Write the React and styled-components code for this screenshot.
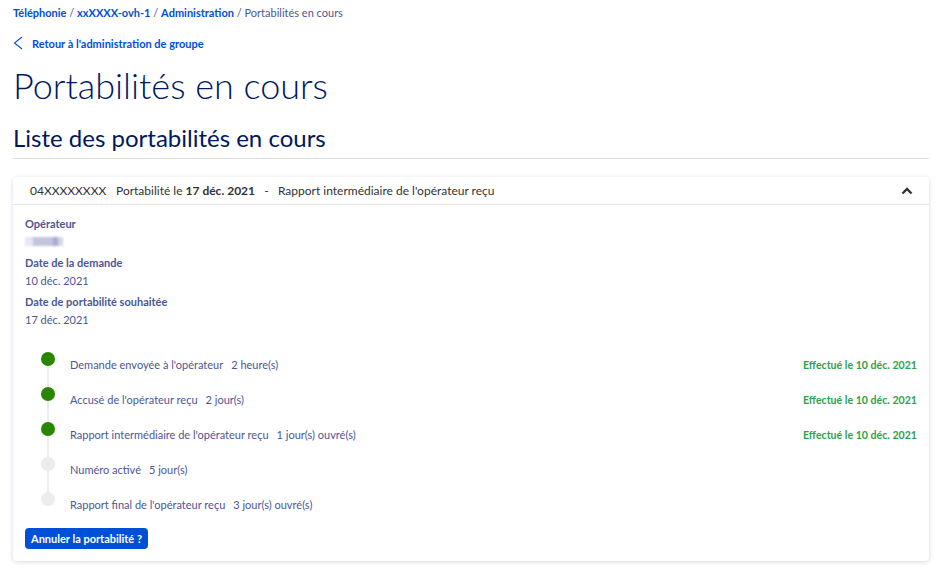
import styled, { createGlobalStyle } from 'styled-components';

const GlobalStyle = createGlobalStyle`
  body {
    margin: 0;
    background: #fff;
    font-family: 'Lato', 'Noto Sans', sans-serif;
  }
`;

const Page = styled.div`
  padding: 5px 23px 20px 13px;
`;

const Breadcrumb = styled.nav`
  font-size: 11px;
  line-height: 16px;
  color: #4d5693;
  white-space: nowrap;
`;

const Crumb = styled.a`
  color: #0050d7;
  font-weight: 700;
  text-decoration: none;
`;

const BackLink = styled.a`
  display: flex;
  align-items: center;
  gap: 9px;
  margin-top: 14px;
  height: 16px;
  color: #0050d7;
  font-size: 11px;
  font-weight: 700;
  text-decoration: none;
`;

const Title = styled.h1`
  margin: 12px 0 0;
  font-size: 36px;
  font-weight: 300;
  line-height: 44px;
  color: #00185e;
`;

const Subtitle = styled.h2`
  margin: 16px 0 0;
  font-size: 24px;
  font-weight: 400;
  line-height: 30px;
  color: #00185e;
  padding-bottom: 5px;
  border-bottom: 1px solid #dcdcdc;
`;

const Card = styled.section`
  margin-top: 18px;
  border-radius: 4px;
  background: #fff;
  box-shadow: 0 1px 4px rgba(40, 40, 120, 0.18);
`;

const CardHeader = styled.header`
  display: flex;
  align-items: center;
  height: 27px;
  padding: 0 16px 0 17px;
  border-bottom: 1px solid #e2e2e2;
  font-size: 12px;
  color: #333;
`;

const Number = styled.span`
  width: 86px;
`;

const Summary = styled.span`
  flex: 1;
  b {
    font-weight: 700;
  }
`;

const CardBody = styled.div`
  padding: 12px 12px 12px 12px;
`;

const Field = styled.div`
  display: flex;
  flex-direction: column;
  gap: 4px;
  margin-bottom: 7px;
  font-size: 11px;
  color: #4d5693;
`;

const Label = styled.span`
  font-weight: 700;
  line-height: 14px;
`;

const Value = styled.span`
  line-height: 14px;
`;

const Blur = styled.span`
  display: block;
  width: 38px;
  height: 9px;
  margin: 2px 0 3px;
  background: linear-gradient(90deg, #e6e7f0 0 20%, #c2c5de 20% 75%, #a9acd0 75% 88%, #d4d6e8 88%);
  filter: blur(1px);
`;

const Timeline = styled.ol`
  position: relative;
  list-style: none;
  margin: 25px 0 0;
  padding: 0;
  &::before {
    content: '';
    position: absolute;
    left: 22px;
    top: 8px;
    bottom: 28px;
    width: 2px;
    background: #ececec;
  }
`;

const Step = styled.li`
  position: relative;
  display: flex;
  align-items: flex-start;
  height: 35px;
  padding-left: 45px;
  font-size: 11px;
  color: #4d5693;
  &::before {
    content: '';
    position: absolute;
    left: 16px;
    top: 0;
    width: 14px;
    height: 14px;
    border-radius: 50%;
    background: ${(p) => (p.$done ? '#288600' : '#ececec')};
  }
`;

const StepText = styled.span`
  flex: 1;
  padding-top: 6px;
  line-height: 14px;
`;

const Duration = styled.span`
  margin-left: 8px;
`;

const Done = styled.span`
  padding-top: 6px;
  line-height: 14px;
  font-size: 10.6px;
  font-weight: 700;
  color: #2fa24a;
`;

const CancelButton = styled.button`
  margin-top: 0;
  height: 21px;
  padding: 0 6px;
  border: none;
  border-radius: 4px;
  background: #0050d7;
  color: #fff;
  font-family: inherit;
  font-size: 11px;
  font-weight: 700;
  cursor: pointer;
`;

const steps = [
  { label: "Demande envoyée à l'opérateur", duration: '2 heure(s)', done: true },
  { label: "Accusé de l'opérateur reçu", duration: '2 jour(s)', done: true },
  { label: "Rapport intermédiaire de l'opérateur reçu", duration: '1 jour(s) ouvré(s)', done: true },
  { label: 'Numéro activé', duration: '5 jour(s)', done: false },
  { label: "Rapport final de l'opérateur reçu", duration: '3 jour(s) ouvré(s)', done: false },
];

const App = () => (
  <>
    <GlobalStyle />
    <Page>
      <Breadcrumb>
        <Crumb href="#">Téléphonie</Crumb> / <Crumb href="#">xxXXXX-ovh-1</Crumb> /{' '}
        <Crumb href="#">Administration</Crumb> / Portabilités en cours
      </Breadcrumb>

      <BackLink href="#">
        <svg width="10" height="14" viewBox="0 0 10 14">
          <path d="M9 1 L1.5 7 L9 13" fill="none" stroke="#0050d7" strokeWidth="1.1" />
        </svg>
        Retour à l'administration de groupe
      </BackLink>

      <Title>Portabilités en cours</Title>
      <Subtitle>Liste des portabilités en cours</Subtitle>

      <Card>
        <CardHeader>
          <Number>04XXXXXXXX</Number>
          <Summary>
            Portabilité le <b>17 déc. 2021</b>&nbsp;&nbsp; - &nbsp;&nbsp;Rapport intermédiaire de
            l'opérateur reçu
          </Summary>
          <svg width="12" height="8" viewBox="0 0 12 8">
            <path d="M1.5 6.5 L6 2 L10.5 6.5" fill="none" stroke="#333" strokeWidth="2.4" />
          </svg>
        </CardHeader>

        <CardBody>
          <Field>
            <Label>Opérateur</Label>
            <Blur />
          </Field>
          <Field>
            <Label>Date de la demande</Label>
            <Value>10 déc. 2021</Value>
          </Field>
          <Field>
            <Label>Date de portabilité souhaitée</Label>
            <Value>17 déc. 2021</Value>
          </Field>

          <Timeline>
            {steps.map((s) => (
              <Step key={s.label} $done={s.done}>
                <StepText>
                  {s.label}
                  <Duration>{s.duration}</Duration>
                </StepText>
                {s.done && <Done>Effectué le 10 déc. 2021</Done>}
              </Step>
            ))}
          </Timeline>

          <CancelButton>Annuler la portabilité ?</CancelButton>
        </CardBody>
      </Card>
    </Page>
  </>
);

export default App;
